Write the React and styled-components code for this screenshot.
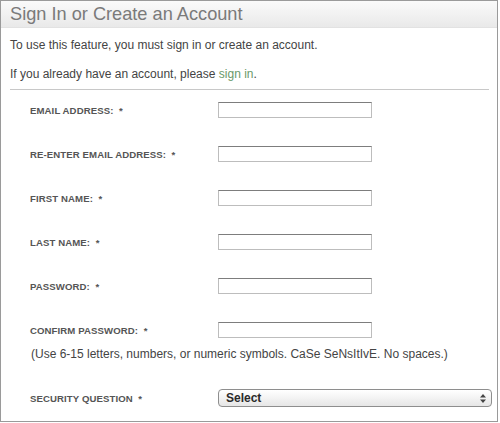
import React from "react";
import styled, { createGlobalStyle } from "styled-components";

const Global = createGlobalStyle`
  html, body { margin: 0; padding: 0; background: #fff; }
  body { font-family: "Liberation Sans", Arial, Helvetica, sans-serif; }
`;

const Panel = styled.div`
  box-sizing: border-box;
  width: 498px;
  height: 422px;
  border: 1px solid #9a9a9a;
  background: #fff;
  overflow: hidden;
`;

const Header = styled.div`
  height: 26px;
  display: flex;
  align-items: center;
  padding-left: 9px;
  background: linear-gradient(#fafafa, #e9e9e9);
  border-bottom: 1px solid #e2e2e2;
  color: #7a7a7a;
  font-size: 18.2px;
`;

const Intro = styled.div`
  padding: 9px 9px 0;
  display: flex;
  flex-direction: column;
  gap: 13px;
`;

const Para = styled.p`
  margin: 0;
  font-size: 12px;
  line-height: 16px;
  color: #444;
`;

const Link = styled.a`
  color: #6a9a6a;
  text-decoration: none;
`;

const Divider = styled.hr`
  margin: 7px 8px 0 9px;
  border: 0;
  border-top: 1px solid #c8c8c8;
  height: 0;
`;

const Form = styled.div`
  padding: 4px 0 0 29px;
  display: flex;
  flex-direction: column;
`;

const Row = styled.div`
  height: 32px;
  margin-top: ${(p) => p.$gap}px;
  display: grid;
  grid-template-columns: 188px 1fr;
  align-items: center;
`;

const Label = styled.label`
  font-size: 9.6px;
  font-weight: bold;
  color: #555;
  letter-spacing: 0.1px;
`;

const Input = styled.input`
  box-sizing: border-box;
  width: 154px;
  height: 16px;
  margin: 0;
  padding: 0;
  border: 1px solid #bdbdbd;
  border-top-color: #7d7d7d;
  background: #fff;
`;

const Hint = styled.div`
  height: 16px;
  line-height: 16px;
  font-size: 12px;
  color: #444;
  margin-left: 1px;
`;

const Select = styled.div`
  box-sizing: border-box;
  width: 274px;
  height: 18px;
  border: 1px solid #8e8e8e;
  border-radius: 4px;
  background: linear-gradient(#ffffff, #f3f3f3 50%, #e6e6e6);
  display: flex;
  align-items: center;
  justify-content: space-between;
  padding: 0 5px 0 7px;
  font-size: 12px;
  font-weight: bold;
  color: #2a2a2a;
`;

const fields = [
  "EMAIL ADDRESS:",
  "RE-ENTER EMAIL ADDRESS:",
  "FIRST NAME:",
  "LAST NAME:",
  "PASSWORD:",
  "CONFIRM PASSWORD:",
];

export default function App() {
  return (
    <>
      <Global />
      <Panel>
        <Header>Sign In or Create an Account</Header>
        <Intro>
          <Para>To use this feature, you must sign in or create an account.</Para>
          <Para>
            If you already have an account, please <Link href="#">sign in</Link>.
          </Para>
        </Intro>
        <Divider />
        <Form>
          {fields.map((f, i) => (
            <Row key={f} $gap={i === 0 ? 0 : 12}>
              <Label>{f}&nbsp; *</Label>
              <Input type="text" />
            </Row>
          ))}
          <Hint>
            (Use 6-15 letters, numbers, or numeric symbols. CaSe SeNsItIvE. No spaces.)
          </Hint>
          <Row $gap={20}>
            <Label>SECURITY QUESTION&nbsp; *</Label>
            <Select>
              <span>Select</span>
              <svg width="6" height="9" viewBox="0 0 6 9">
                <path d="M0 3.5 L3 0 L6 3.5 Z M0 5.5 L3 9 L6 5.5 Z" fill="#444" />
              </svg>
            </Select>
          </Row>
        </Form>
      </Panel>
    </>
  );
}
